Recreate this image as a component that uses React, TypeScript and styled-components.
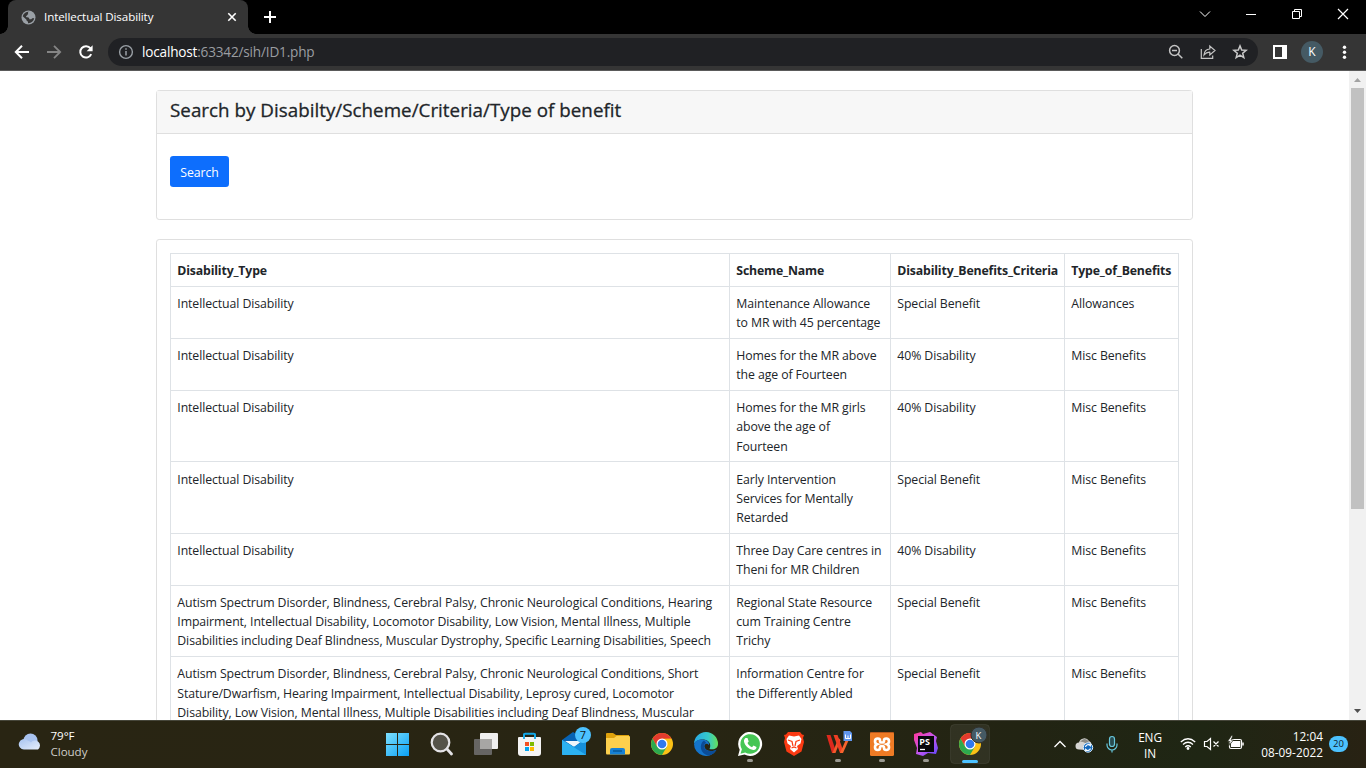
import React from "react";
import styled, { createGlobalStyle } from "styled-components";

const GlobalStyle = createGlobalStyle`
  *, *::before, *::after { box-sizing: border-box; }
  body { margin: 0; overflow: hidden; background: #fff; font-family: "Open Sans", "Noto Sans", sans-serif; }
  svg { display: block; flex: none; }
`;

const Screen = styled.div`
  display: flex;
  flex-direction: column;
  width: 1366px;
  height: 768px;
  overflow: hidden;
`;

/* ---------- browser chrome ---------- */

const TabStrip = styled.header`
  display: flex;
  justify-content: space-between;
  height: 34px;
  flex: none;
  background: #000;
`;

const TabArea = styled.div`
  display: flex;
  align-items: center;
  gap: 14px;
`;

const Tab = styled.div`
  position: relative;
  display: flex;
  align-items: center;
  width: 240px;
  height: 34px;
  margin-left: 8px;
  padding: 0 10px 0 13px;
  border-radius: 8px 8px 0 0;
  background: #353535;
  &::before, &::after {
    content: "";
    position: absolute;
    bottom: 0;
    width: 8px;
    height: 8px;
  }
  &::before { left: -8px; background: radial-gradient(circle at 0 0, #000 7.5px, #353535 8px); }
  &::after { right: -8px; background: radial-gradient(circle at 100% 0, #000 7.5px, #353535 8px); }
`;

const TabTitle = styled.span`
  flex: 1;
  margin-left: 8px;
  color: #fff;
  font-size: 11.6px;
  letter-spacing: -0.1px;
  line-height: 16px;
  white-space: nowrap;
`;

const WindowButtons = styled.div`
  display: flex;
  height: 28px;
`;

const WindowButton = styled.span`
  display: flex;
  align-items: center;
  justify-content: center;
  width: 46px;
`;

const Toolbar = styled.div`
  display: flex;
  align-items: center;
  height: 37px;
  flex: none;
  padding: 0 13px 0 14px;
  border-bottom: 1px solid #5a5a5a;
  background: #353535;
`;

const NavButtons = styled.div`
  display: flex;
  gap: 16px;
  margin-right: 14px;
`;

const AddressBar = styled.div`
  display: flex;
  align-items: center;
  width: 1150px;
  height: 28px;
  padding: 0 10px 0 10px;
  border-radius: 14px;
  background: #202124;
`;

const Address = styled.span`
  flex: 1;
  margin-left: 8px;
  color: #9a9da1;
  font-size: 13.6px;
  letter-spacing: -0.19px;
  line-height: 18px;
`;

const Host = styled.span`
  color: #fff;
`;

const AddressActions = styled.div`
  display: flex;
  gap: 16px;
`;

const ToolbarActions = styled.div`
  display: flex;
  align-items: center;
  margin-left: 14px;
  gap: 13px;
`;

const Avatar = styled.span`
  width: 22px;
  height: 22px;
  border-radius: 50%;
  background: #455a64;
  color: #fff;
  font: 12px/22px "Open Sans", sans-serif;
  text-align: center;
`;

/* ---------- page ---------- */

const Viewport = styled.div`
  display: flex;
  height: 649px;
  flex: none;
  overflow: hidden;
  background: #fff;
`;

const Page = styled.main`
  display: flex;
  flex-direction: column;
  gap: 19px;
  width: 1349px;
  padding: 19px 156px 0;
  color: #212529;
`;

const Card = styled.section`
  border: 1px solid #dfdfdf;
  border-radius: 3.2px;
  flex: none;
`;

const CardHeader = styled.div`
  height: 43px;
  padding: 6.4px 13px;
  border-bottom: 1px solid #dfdfdf;
  background: #f7f7f7;
`;

const CardTitle = styled.h4`
  margin: 0;
  font-size: 18.8px;
  font-weight: 500;
  letter-spacing: 0.02px;
  line-height: 26px;
  white-space: nowrap;
  -webkit-text-stroke: 0.3px currentColor;
`;

const CardBody = styled.div`
  height: 85px;
  padding: 22px 13px;
`;

const SearchButton = styled.button`
  display: block;
  width: 59px;
  height: 31px;
  padding: 2px 0 0;
  border: 0;
  border-radius: 3.2px;
  background: #0d6efd;
  color: #fff;
  font: 12.3px/29px "Open Sans", sans-serif;
  letter-spacing: -0.1px;
`;

const TableCard = styled(Card)`
  padding: 13px;
`;

const Grid = styled.div`
  width: 1009px;
  border: 1px solid #dee2e6;
  border-bottom: 0;
`;

const Row = styled.div<{ $head?: boolean }>`
  display: grid;
  grid-template-columns: 559px 161px 174px 113px;
  border-bottom: 1px solid #dee2e6;
  font-weight: ${(p) => (p.$head ? 700 : 400)};
  letter-spacing: ${(p) => (p.$head ? "-0.16px" : "-0.095px")};
`;

const Cell = styled.div`
  padding: 7.16px 0 5.55px 6.3px;
  font-size: 12.3px;
  line-height: 19.2px;
  &:not(:last-child) { border-right: 1px solid #dee2e6; }
`;

const Line = styled.span`
  display: block;
  white-space: nowrap;
`;

const ScrollTrack = styled.div`
  display: flex;
  flex-direction: column;
  align-items: center;
  width: 17px;
  height: 649px;
  background: #f1f1f1;
`;

const ScrollThumb = styled.div`
  width: 13px;
  height: 421px;
  margin-bottom: auto;
  background: #c1c1c1;
`;

/* ---------- taskbar ---------- */

const Taskbar = styled.footer`
  display: flex;
  height: 48px;
  flex: none;
  border-top: 1px solid #46463a;
  background: linear-gradient(90deg, #292513 0%, #282513 50%, #222413 75%, #1f2614 88%, #282213 100%);
  color: #fff;
`;

const Weather = styled.div`
  display: flex;
  align-items: flex-start;
  width: 375px;
  padding-left: 18px;
`;

const WeatherText = styled.div`
  margin: 7px 0 0 7.5px;
  font-size: 11.6px;
  letter-spacing: -0.05px;
  line-height: 16px;
`;

const Muted = styled.div`
  color: #d0cfca;
`;

const AppIcons = styled.div`
  display: flex;
`;

const AppSlot = styled.div`
  display: flex;
  width: 44px;
  height: 47px;
  & > svg { margin-top: -1px; }
`;

const Tray = styled.div`
  display: flex;
  flex: 1;
  padding-left: 63px;
  font-size: 11.8px;
  line-height: 16px;
`;

const Language = styled.div`
  width: 30px;
  margin: 8px 0 0 11px;
  text-align: center;
  letter-spacing: -0.1px;
`;

const StatusIcons = styled.div`
  margin-left: 15px;
`;

const Clock = styled.div`
  width: 66px;
  margin: 7px 0 0 11px;
  text-align: right;
  letter-spacing: 0.02px;
  white-space: nowrap;
`;

const NotificationCount = styled.span`
  width: 19px;
  height: 16px;
  margin: 15px 0 0 6px;
  border-radius: 9px;
  background: #4cc2ff;
  color: #10222c;
  font-size: 9.5px;
  line-height: 16px;
  text-align: center;
`;

const headers = ["Disability_Type", "Scheme_Name", "Disability_Benefits_Criteria", "Type_of_Benefits"];

const rows: { type: string[]; scheme: string[]; criteria: string; benefit: string }[] = [
  { type: ["Intellectual Disability"], scheme: ["Maintenance Allowance", "to MR with 45 percentage"], criteria: "Special Benefit", benefit: "Allowances" },
  { type: ["Intellectual Disability"], scheme: ["Homes for the MR above", "the age of Fourteen"], criteria: "40% Disability", benefit: "Misc Benefits" },
  { type: ["Intellectual Disability"], scheme: ["Homes for the MR girls", "above the age of", "Fourteen"], criteria: "40% Disability", benefit: "Misc Benefits" },
  { type: ["Intellectual Disability"], scheme: ["Early Intervention", "Services for Mentally", "Retarded"], criteria: "Special Benefit", benefit: "Misc Benefits" },
  { type: ["Intellectual Disability"], scheme: ["Three Day Care centres in", "Theni for MR Children"], criteria: "40% Disability", benefit: "Misc Benefits" },
  {
    type: [
      "Autism Spectrum Disorder, Blindness, Cerebral Palsy, Chronic Neurological Conditions, Hearing",
      "Impairment, Intellectual Disability, Locomotor Disability, Low Vision, Mental Illness, Multiple",
      "Disabilities including Deaf Blindness, Muscular Dystrophy, Specific Learning Disabilities, Speech",
    ],
    scheme: ["Regional State Resource", "cum Training Centre", "Trichy"],
    criteria: "Special Benefit",
    benefit: "Misc Benefits",
  },
  {
    type: [
      "Autism Spectrum Disorder, Blindness, Cerebral Palsy, Chronic Neurological Conditions, Short",
      "Stature/Dwarfism, Hearing Impairment, Intellectual Disability, Leprosy cured, Locomotor",
      "Disability, Low Vision, Mental Illness, Multiple Disabilities including Deaf Blindness, Muscular",
    ],
    scheme: ["Information Centre for", "the Differently Abled"],
    criteria: "Special Benefit",
    benefit: "Misc Benefits",
  },
];

const Lines = ({ items }: { items: string[] }) => (
  <>
    {items.map((text) => (
      <Line key={text}>{text}</Line>
    ))}
  </>
);

/* ---------- icons ---------- */

const Slot = ({ children, shift = 0 }: { children: React.ReactNode; shift?: number }) => (
  <AppSlot>
    <svg width="44" height="48" viewBox={`${-shift} 0 44 48`}>{children}</svg>
  </AppSlot>
);

const Running = () => <rect x="19" y="39" width="6" height="3" rx="1.5" fill="#9b9a92" />;

const ChromeMark = ({ cx, cy }: { cx: number; cy: number }) => (
  <g transform={`translate(${cx} ${cy})`}>
    <circle r="11" fill="#fbc116" />
    <path d="M-9.5-5.5A11 11 0 0 1 9.5-5.5L0-5.2L-4.8 2.7Z" fill="#e33b2e" />
    <path d="M-9.5-5.5A11 11 0 0 0 0 11L4.8 2.7L-4.8 2.7Z" fill="#2da94f" />
    <circle r="5.500" fill="#fff" />
    <circle r="4.300" fill="#3079ee" />
  </g>
);

const icon = { fill: "none", stroke: "#fff", strokeWidth: 1.8 } as const;

export default function App() {
  return (
    <Screen>
      <GlobalStyle />
      <TabStrip>
        <TabArea>
          <Tab>
            <svg width="15" height="15" viewBox="0 0 15 15">
              <circle cx="7.5" cy="7.5" r="7" fill="#9aa0a6" />
              <path d="M8.500 1.800C6.800 2 6.600 3.200 7.300 3.900C6.200 4.200 6.300 5.500 5.300 5.900C4.700 6.200 5 7.200 6.300 7.200C8.200 7.200 8.300 8.200 8.300 9.200L10.300 9.300C10.600 7.900 12 8.200 13.200 7.900A5.900 5.900 0 0 1 7 13.300V11.600C5.600 11.500 5.700 10.300 5.300 9.500L1.700 6.300A6 6 0 0 1 8.500 1.800" fill="#353535" />
              <path d="M8.500 1.800L10.500 2.400L9.800 4.400L11.800 5.600L13.400 6.800A6 6 0 0 0 8.500 1.800" fill="#9aa0a6" />
            </svg>
            <TabTitle>Intellectual Disability</TabTitle>
            <svg width="12" height="12" viewBox="0 0 12 12"><path d="M2.300 2.300L9.700 9.700M9.700 2.300L2.300 9.700" {...icon} strokeWidth={1.600} /></svg>
          </Tab>
          <svg width="16" height="16" viewBox="0 0 16 16"><path d="M8 2V14M2 8H14" {...icon} strokeWidth={2} /></svg>
        </TabArea>
        <WindowButtons>
          <WindowButton><svg width="12" height="12" viewBox="0 0 12 12"><path d="M1 3.500L6 8.500L11 3.500" {...icon} strokeWidth={1} /></svg></WindowButton>
          <WindowButton><svg width="12" height="12" viewBox="0 0 12 12"><path d="M1 6.500H11" {...icon} strokeWidth={1} /></svg></WindowButton>
          <WindowButton><svg width="12" height="12" viewBox="0 0 12 12"><path d="M1.500 3.500H8.500V10.500H1.500ZM3.500 3.500V1.500H10.500V8.500H8.500" {...icon} strokeWidth={1} /></svg></WindowButton>
          <WindowButton><svg width="12" height="12" viewBox="0 0 12 12"><path d="M1 1L11 11M11 1L1 11" {...icon} strokeWidth={1.200} /></svg></WindowButton>
        </WindowButtons>
      </TabStrip>

      <Toolbar>
        <NavButtons>
          <svg width="16" height="16" viewBox="0 0 16 16"><path d="M15 8H2M8 1.800L1.800 8L8 14.200" {...icon} strokeWidth={2} /></svg>
          <svg width="16" height="16" viewBox="0 0 16 16"><path d="M1 8H14M8 1.800L14.200 8L8 14.200" {...icon} stroke="#858585" strokeWidth={1.800} /></svg>
          <svg width="16" height="16" viewBox="0 0 16 16">
            <path d="M13.200 10.200A5.700 5.700 0 1 1 12.500 4.400" {...icon} strokeWidth={2} />
            <path d="M14.600 1.200V7.200H8.600Z" fill="#fff" />
          </svg>
        </NavButtons>
        <AddressBar>
          <svg width="16" height="16" viewBox="0 0 16 16">
            <circle cx="8" cy="8" r="6.400" {...icon} stroke="#9aa0a6" strokeWidth={1.400} />
            <path d="M8 7V11.500M8 4.200V5.800" stroke="#9aa0a6" strokeWidth="1.500" />
          </svg>
          <Address><Host>localhost</Host>:63342/sih/ID1.php</Address>
          <AddressActions>
            <svg width="16" height="16" viewBox="0 0 16 16"><circle cx="6.500" cy="6.500" r="4.900" {...icon} stroke="#c4c4c4" strokeWidth={1.500} /><path d="M4 6.500H9M10 10L14.300 14.300" stroke="#c4c4c4" strokeWidth="1.500" /></svg>
            <svg width="16" height="16" viewBox="0 0 16 16"><path d="M1.300 5V14.300H12.700V11.500" {...icon} stroke="#c4c4c4" strokeWidth={1.200} /><path d="M4 11C4.300 7.200 6.500 5.200 9.800 5V2L15 6.500L9.800 11V8.200C7.500 8.100 5.600 9 4 11Z" {...icon} stroke="#c4c4c4" strokeWidth={1.200} /></svg>
            <svg width="16" height="16" viewBox="0 0 16 16"><path d="M8 1.900L9.700 6L14.100 6.300L10.700 9.200L11.800 13.600L8 11.200L4.200 13.600L5.300 9.200L1.900 6.300L6.300 6Z" {...icon} stroke="#c9c9c9" strokeWidth={1.500} /></svg>
          </AddressActions>
        </AddressBar>
        <ToolbarActions>
          <svg width="16" height="16" viewBox="0 0 16 16"><path d="M1 1H15V15H1ZM3 3V13H10V3Z" fill="#fff" fillRule="evenodd" /></svg>
          <Avatar>K</Avatar>
          <svg width="16" height="16" viewBox="0 0 16 16" fill="#fff"><circle cx="8.500" cy="3.200" r="1.700" /><circle cx="8.500" cy="8.200" r="1.700" /><circle cx="8.500" cy="13.200" r="1.700" /></svg>
        </ToolbarActions>
      </Toolbar>

      <Viewport>
        <Page>
          <Card>
            <CardHeader><CardTitle>Search by Disabilty/Scheme/Criteria/Type of benefit</CardTitle></CardHeader>
            <CardBody><SearchButton>Search</SearchButton></CardBody>
          </Card>
          <TableCard>
            <Grid>
              <Row $head>
                {headers.map((h) => <Cell key={h}>{h}</Cell>)}
              </Row>
              {rows.map((row, i) => (
                <Row key={i}>
                  <Cell><Lines items={row.type} /></Cell>
                  <Cell><Lines items={row.scheme} /></Cell>
                  <Cell>{row.criteria}</Cell>
                  <Cell>{row.benefit}</Cell>
                </Row>
              ))}
            </Grid>
          </TableCard>
        </Page>
        <ScrollTrack>
          <svg width="17" height="17" viewBox="0 0 17 17"><path d="M5 11L8.500 7L12 11Z" fill="#a3a3a3" /></svg>
          <ScrollThumb />
          <svg width="17" height="17" viewBox="0 0 17 17"><path d="M5 6L8.500 10L12 6Z" fill="#505050" /></svg>
        </ScrollTrack>
      </Viewport>

      <Taskbar>
        <Weather>
          <svg width="25" height="47" viewBox="0 0 25 47">
            <defs><linearGradient id="cloud" x1="0" y1="0" x2="1" y2="1"><stop offset="0" stopColor="#a8c4f0" /><stop offset="1" stopColor="#e6eefb" /></linearGradient></defs>
            <circle cx="12.500" cy="19.500" r="7" fill="#a9c3ef" />
            <path d="M6.500 28.500A5.200 5.200 0 1 1 9.500 19.500A6 6 0 0 1 13 21.500A5 5 0 1 1 20 28.500Z" fill="url(#cloud)" />
          </svg>
          <WeatherText>79°F<Muted>Cloudy</Muted></WeatherText>
        </Weather>
        <AppIcons>
          <Slot>
            <defs><linearGradient id="win" x1="0" y1="0" x2="1" y2="1"><stop offset="0" stopColor="#7de0ff" /><stop offset="1" stopColor="#0aa0f5" /></linearGradient></defs>
            <path d="M11 13H22V24H11ZM23 13H34V24H23ZM11 25H22V36H11ZM23 25H34V36H23Z" fill="url(#win)" />
          </Slot>
          <Slot shift={1}>
            <circle cx="20.500" cy="22.500" r="8.800" fill="#55534a" stroke="#e4e3e6" strokeWidth="2.200" />
            <path d="M27 29L31.500 34" stroke="#e4e3e6" strokeWidth="2.800" strokeLinecap="round" />
          </Slot>
          <Slot>
            <rect x="17" y="13" width="18" height="16" rx="1" fill="#eeeeee" />
            <rect x="11" y="19" width="18" height="16" rx="1" fill="#6c6b69" fillOpacity=".93" />
            <rect x="17" y="19" width="12" height="10" fill="#a7a6a4" />
          </Slot>
          <Slot>
            <path d="M17 17V15Q17 13.700 18.300 13.700H26.700Q28 13.700 28 15V17" fill="none" stroke="#14a8e8" strokeWidth="2" />
            <path d="M11 18Q11 17 12 17H33Q34 17 34 18V33Q34 36 31 36H14Q11 36 11 33Z" fill="#f4f4f4" />
            <path d="M17 13.700V19M28 13.700V19" stroke="#14a8e8" strokeWidth="1.800" />
            <path d="M18 22H22V26H18Z" fill="#f25022" /><path d="M23 22H27V26H23Z" fill="#7fba00" /><path d="M18 27H22V31H18Z" fill="#00a4ef" /><path d="M23 27H27V31H23Z" fill="#ffb900" />
          </Slot>
          <Slot>
            <path d="M11 20L22 12L35 20V30H11Z" fill="#0763b4" />
            <path d="M14 21H31L23 27Z" fill="#f0f5fa" />
            <path d="M11 20L23 27L35 20V34Q35 35 34 35H12Q11 35 11 34Z" fill="#25a5ea" />
            <path d="M11 20L35 35V20L23 27Z" fill="#1590dc" /><path d="M11 20L35 35H12Q11 35 11 34Z" fill="#2cb2f2" />
            <circle cx="32" cy="15" r="8" fill="#4cc2ff" />
            <text x="32" y="19" fill="#101820" fontSize="11" textAnchor="middle">7</text>
          </Slot>
          <Slot>
            <path d="M11 14Q11 13 12 13H18L21 15H34V20H11Z" fill="#dfa20c" />
            <path d="M11 18H19L21.500 16H34Q35 16 35 17V33Q35 34.500 34 34.500H12Q11 34.500 11 33Z" fill="#fdd04d" />
            <path d="M15 34.500V30Q15 28 17 28H28Q30 28 30 30V34.500Z" fill="#1681d5" /><path d="M18 31H27" stroke="#075999" strokeWidth="1.500" />
          </Slot>
          <Slot shift={1}><ChromeMark cx={22} cy={24} /></Slot>
          <Slot shift={1}>
            <defs>
              <linearGradient id="edgeTop" x1="0" x2="1"><stop offset="0" stopColor="#27a8e8" /><stop offset=".6" stopColor="#36c9c8" /><stop offset="1" stopColor="#65e05a" /></linearGradient>
            </defs>
            <path d="M10 24A12 12 0 0 1 34 24C34 28.500 30 30 25.500 29C27.500 25 25.500 20 20 19.500C15 19.200 11 21 10 24Z" fill="url(#edgeTop)" />
            <path d="M10 24C11.500 20.500 15 19.200 19.500 19.700C23.500 20 25.500 22.500 25 25C22.500 22.300 20 24 20.500 27C21.500 31.500 28 32 32.500 29.800A12 12 0 0 1 10 24Z" fill="#1474cb" />
            <path d="M20 20.500C14.500 24 16 34.500 25 35.600A12 12 0 0 0 32.500 29.800C28.500 32 20.500 31.500 20 26.500C20 24.500 21 23.500 22.300 23Z" fill="#0b4c98" />
          </Slot>
          <Slot shift={1}>
            <path d="M10 36L11.700 29.800A12 12 0 1 1 16.500 34.500Z" fill="#fff" />
            <path d="M12.500 33.700L13.900 29.200A9.800 9.800 0 1 1 17.200 32.400Z" fill="#45c655" />
            <path d="M17.500 18L19.500 18L20.700 21.400L19.500 23.100C20.500 25.200 22 26.500 24 27.300L25.500 25.600L28.500 27.100C28.500 29.300 26.800 30.300 25.200 30C20.500 29.200 16.800 25.600 16 21.500C15.800 20 16.500 18.700 17.500 18Z" fill="#fff" />
            <Running />
          </Slot>
          <Slot shift={1}>
            <path d="M16 12H28L30 14.500L32 15L31 18L32 22L29.500 31.500L22 36L14.500 31.500L12 22L13 18L12 15L14 14.500Z" fill="#fb3a13" />
            <path d="M17 15.500L22 16.500L27 15.500L29.500 19L28.500 23.500L25 26L26 29L22 32.500L18 29L19 26L15.500 23.500L14.500 19Z" fill="#fff" />
            <path d="M16 20L20 21.500L21 26M28 20L24 21.500L23 26M19.500 28L22 27L24.500 28" fill="none" stroke="#fb3a13" strokeWidth="1.200" />
          </Slot>
          <Slot shift={1}>
            <path d="M10.500 15H14.500L19.500 30L17 33H16Z" fill="#de291d" /><path d="M16.500 33L22.500 18L24.500 20L19.500 33Z" fill="#f35a2c" />
            <path d="M17.500 15H21.500L27 30L26 33H24Z" fill="#ef3f24" /><path d="M24 33L30 19.500H33L27 33Z" fill="#f8642d" />
            <path d="M27.500 11H34L36 13V21H27.500Z" fill="#6096ee" />
            <path d="M29.500 14.500V18.500H34.500V14.500M32 15.500V18.500" fill="none" stroke="#fff" />
            <Running />
          </Slot>
          <Slot shift={1}>
            <rect x="10" y="12" width="24" height="24" rx="1.500" fill="#ef7b25" /><path d="M10.500 12.500H33.500" stroke="#b9571c" />
            <path d="M20 21V20.500Q20 18.500 17.800 18.500Q15 18.500 15 21.300Q15 23.600 17 24.200Q15 24.900 15 27.200Q15 30 17.800 30Q20 30 20 28V27.500Q20 26 22 26Q24 26 24 27.500V28Q24 30 26.200 30Q29 30 29 27.200Q29 24.900 27 24.200Q29 23.600 29 21.300Q29 18.500 26.200 18.500Q24 18.500 24 20.500V21Q24 22.500 22 22.500Q20 22.500 20 21Z" fill="none" stroke="#fff" strokeWidth="2.600" />
            <Running />
          </Slot>
          <Slot shift={1}>
            <defs><linearGradient id="storm" x1="0" y1="0" x2="1" y2="1"><stop offset="0" stopColor="#ff3797" /><stop offset=".5" stopColor="#c757ef" /><stop offset="1" stopColor="#5945ff" /></linearGradient></defs>
            <path d="M10 14L17 12L19 14L26 12L33 17L32 21L34 28L32 34L24 33L19 36L12 34L13 28L10 20Z" fill="url(#storm)" />
            <rect x="14" y="16" width="16" height="16" fill="#08070c" />
            <text x="15.300" y="24.500" fill="#fff" fontSize="9" fontWeight="700">PS</text><path d="M16 29.500H21" stroke="#fff" strokeWidth="1.300" />
            <Running />
          </Slot>
          <Slot shift={1}>
            <rect x="2.500" y="4.500" width="39" height="39" rx="4" fill="#ffffff" fillOpacity=".065" stroke="#ffffff" strokeOpacity=".07" />
            <ChromeMark cx={22} cy={24} />
            <circle cx="31" cy="15" r="8" fill="#455a64" stroke="#32312b" />
            <text x="30.500" y="18.500" fill="#fff" fontSize="9.500" textAnchor="middle">K</text>
            <rect x="14" y="40" width="16" height="3" rx="1.500" fill="#4cc2ff" />
          </Slot>
        </AppIcons>
        <Tray>
          <svg width="70" height="47" viewBox="1054 721 70 47">
            <path d="M1054.500 747L1060 741.500L1065.500 747" {...icon} strokeWidth={1.300} />
            <path d="M1079 749.500A3.500 3.500 0 0 1 1079 742.500A5.500 5.500 0 0 1 1089 741A4 4 0 0 1 1090 748L1086 750Z" fill="#d5d5d2" /><path d="M1082 740Q1086 737 1089 742L1088 746Q1084 741 1080 742Z" fill="#8b8c86" />
            <circle cx="1088" cy="747.500" r="4.700" fill="#1169bd" stroke="#d7edff" />
            <path d="M1085.500 747A2.800 2.800 0 0 1 1090.300 745.500V744M1090.500 748.500A2.800 2.800 0 0 1 1085.700 749.500V751" {...icon} strokeWidth={1.200} />
            <rect x="1109.500" y="736.500" width="5" height="10" rx="2.500" fill="#294c51" stroke="#67c7dc" strokeWidth="1.200" />
            <path d="M1107 743.500V745A5 5 0 0 0 1117 745V743.500M1112 750V752.500" fill="none" stroke="#67c7dc" strokeWidth="1.200" />
          </svg>
          <Language>ENG<br />IN</Language>
          <StatusIcons>
            <svg width="66" height="47" viewBox="1180 721 66 47">
              <path d="M1180.800 742Q1188 735.500 1195.200 742M1183 744.500Q1188 740 1193 744.500M1185.200 747Q1188 744.500 1190.800 747" {...icon} strokeWidth={1.300} />
              <circle cx="1188" cy="748.500" r="1.400" fill="#fff" />
              <path d="M1204.500 741.500H1207L1210.500 738.500V749.500L1207 746.500H1204.500ZM1213.500 741.500L1218.500 746.500M1218.500 741.500L1213.500 746.500" {...icon} strokeWidth={1.200} />
              <rect x="1229.500" y="739.500" width="12" height="9" rx="1.500" fill="none" stroke="#fff" strokeWidth="1.200" />
              <path d="M1231 741H1240.300V747H1231Z" fill="#fff" /><path d="M1243 742.500V745.500" stroke="#fff" strokeWidth="1.500" />
              <path d="M1231.500 735.500L1227.500 741.500H1230L1229 745.500L1233.500 740H1231L1233 735.500Z" fill="#fff" stroke="#1f2514" strokeWidth=".7" />
            </svg>
          </StatusIcons>
          <Clock>12:04<br />08-09-2022</Clock>
          <NotificationCount>20</NotificationCount>
        </Tray>
      </Taskbar>
    </Screen>
  );
}
